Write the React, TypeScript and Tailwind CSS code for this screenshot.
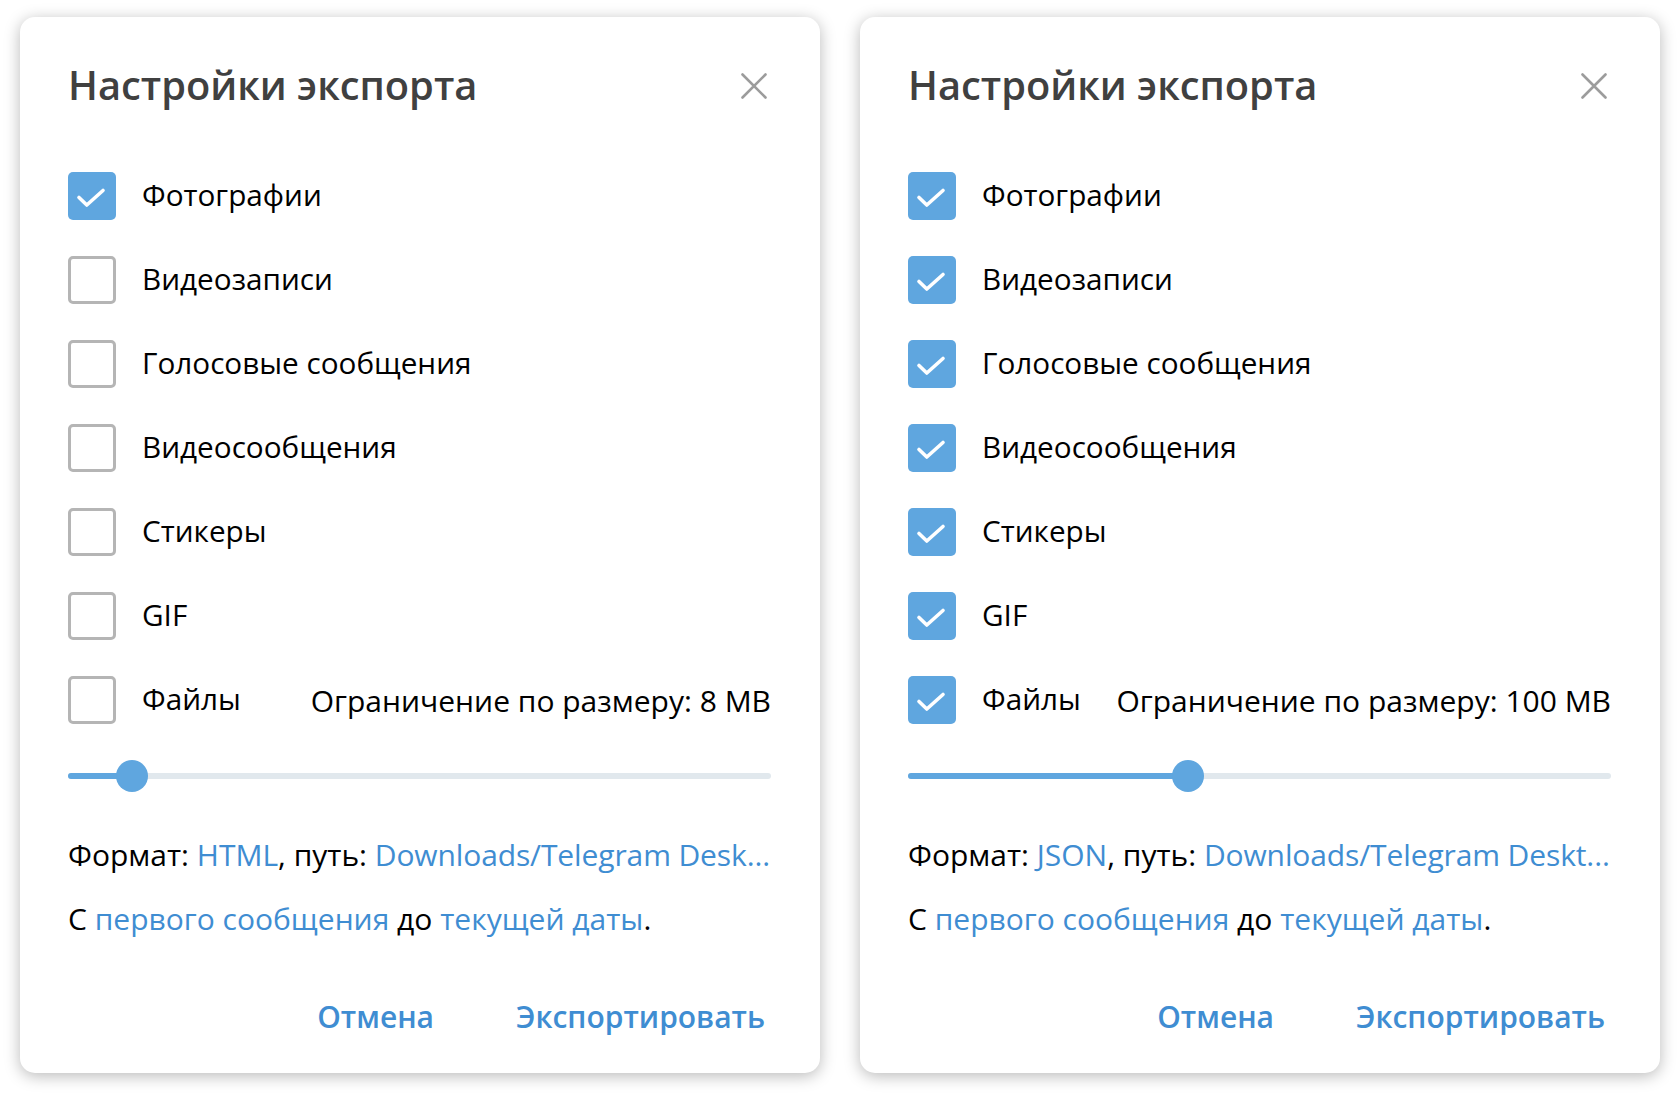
import React from "react";

const FONT = { fontFamily: '"Open Sans", "Noto Sans", sans-serif' };

type Option = { label: string; checked: boolean };

type Panel = {
  options: Option[];
  limit: string;
  knob: number;
  format: string;
  path: string;
};

const labels = [
  "Фотографии",
  "Видеозаписи",
  "Голосовые сообщения",
  "Видеосообщения",
  "Стикеры",
  "GIF",
];

const panels: Panel[] = [
  {
    options: labels.map((label, i) => ({ label, checked: i === 0 })),
    limit: "8 MB",
    knob: 64,
    format: "HTML",
    path: "Downloads/Telegram Desk...",
  },
  {
    options: labels.map((label) => ({ label, checked: true })),
    limit: "100 MB",
    knob: 280,
    format: "JSON",
    path: "Downloads/Telegram Deskt...",
  },
];

function Checkbox({ checked }: { checked: boolean }) {
  if (!checked) {
    return (
      <span className="box-border block h-[48px] w-[48px] shrink-0 rounded-[5px] border-[3px] border-[#b5b5b5] bg-white" />
    );
  }
  return (
    <span className="flex h-[48px] w-[48px] shrink-0 items-center justify-center rounded-[5px] bg-[#5fa6df]">
      <svg width="48" height="48" viewBox="0 0 48 48" fill="none">
        <path
          d="M11 25.5L18.8 33L35 18.5"
          stroke="#fff"
          strokeWidth="3.6"
          strokeLinecap="round"
          strokeLinejoin="round"
        />
      </svg>
    </span>
  );
}

function Row({ option, extra }: { option: Option; extra?: React.ReactNode }) {
  return (
    <div className="flex h-[84px] items-center">
      <Checkbox checked={option.checked} />
      <span className="ml-[26px] pb-[3px] text-[29.7px] leading-[40px] text-black">
        {option.label}
      </span>
      {extra}
    </div>
  );
}

function ExportCard({ panel }: { panel: Panel }) {
  return (
    <div className="flex h-[1056px] w-[800px] shrink-0 flex-col rounded-[15px] bg-white pl-[48px] pr-[49px] shadow-[0_3px_16px_rgba(0,0,0,0.28)]">
      <div className="flex h-[137px] items-center justify-between">
        <h1 className="pb-[2px] text-[39.8px] font-semibold text-[#404040]">
          Настройки экспорта
        </h1>
        <svg
          width="26"
          height="26"
          viewBox="0 0 26 26"
          className="mr-[4px]"
          fill="none"
        >
          <path
            d="M1.5 1.5L24.5 24.5M24.5 1.5L1.5 24.5"
            stroke="#9c9c9c"
            strokeWidth="2.6"
            strokeLinecap="round"
          />
        </svg>
      </div>

      {panel.options.map((o) => (
        <Row key={o.label} option={o} />
      ))}
      <Row
        option={{ label: "Файлы", checked: panel.options[1].checked }}
        extra={
          <span className="ml-auto pt-[2px] text-[30px] leading-[40px] text-black">
            Ограничение по размеру: {panel.limit}
          </span>
        }
      />

      <div className="flex h-[68px] items-center">
        <div className="relative h-[6px] w-full rounded-full bg-[#e1e8ed]">
          <div
            className="absolute left-0 top-0 h-[6px] rounded-full bg-[#5fa6df]"
            style={{ width: panel.knob }}
          />
          <div
            className="absolute top-[-13px] h-[32px] w-[32px] -translate-x-1/2 rounded-full bg-[#5fa6df]"
            style={{ left: panel.knob }}
          />
        </div>
      </div>

      <div className="flex h-[88px] items-center whitespace-nowrap text-[30px] text-black">
        Формат:&nbsp;<span className="text-[#3f8dd2]">{panel.format}</span>
        ,&nbsp;путь:&nbsp;
        <span className="tracking-[-0.12px] text-[#3f8dd2]">{panel.path}</span>
      </div>
      <div className="flex h-[40px] items-center whitespace-nowrap text-[30px] text-black">
        С&nbsp;<span className="text-[#3f8dd2]">первого сообщения</span>
        &nbsp;до&nbsp;<span className="text-[#3f8dd2]">текущей даты</span>.
      </div>

      <div className="mb-[17px] mt-auto flex h-[80px] items-center justify-end gap-[82px] pr-[6px] text-[30px] font-semibold text-[#3f8dd2]">
        <span>Отмена</span>
        <span>Экспортировать</span>
      </div>
    </div>
  );
}

export default function App() {
  return (
    <div
      className="flex h-[1096px] w-[1680px] gap-[40px] bg-white pl-[20px] pt-[17px]"
      style={FONT}
    >
      {panels.map((p, i) => (
        <ExportCard key={i} panel={p} />
      ))}
    </div>
  );
}
